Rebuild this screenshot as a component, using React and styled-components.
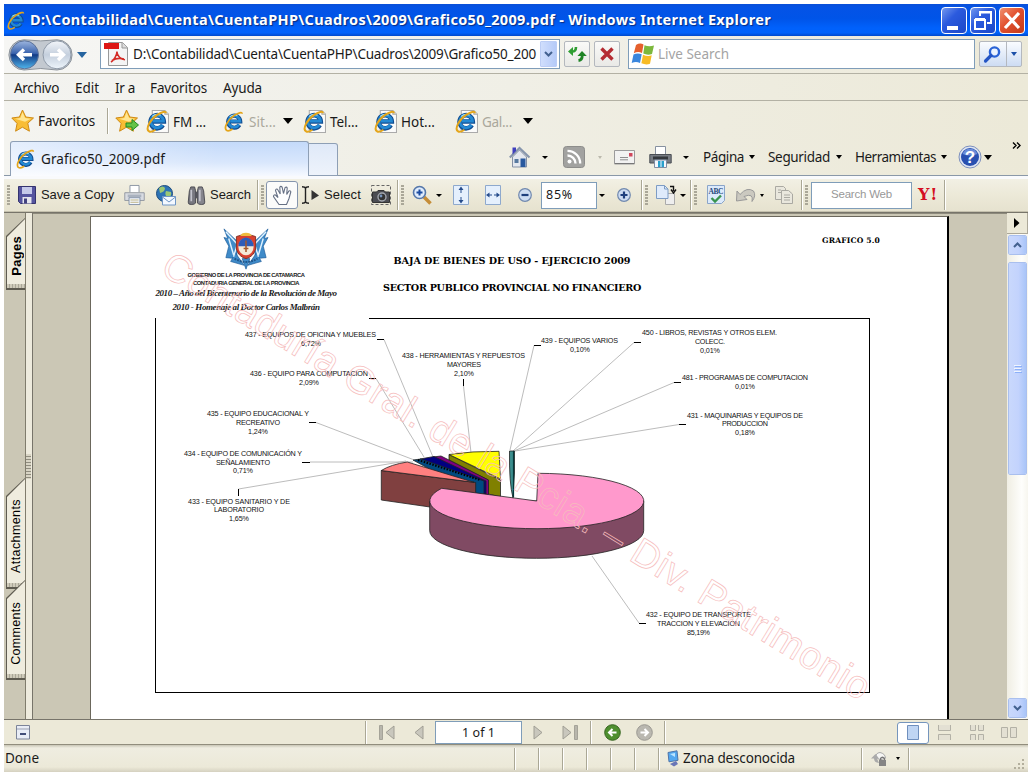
import React, { useLayoutEffect, useRef, useState } from "react";
import styled, { createGlobalStyle } from "styled-components";

const GlobalStyle = createGlobalStyle`
  * { box-sizing: border-box; }
  body { margin: 0; background: #fff; overflow: hidden; font-family: "Noto Sans", "Liberation Sans", sans-serif; }
  svg { display: block; flex: none; overflow: visible; }
`;

/* ---------- text that spreads evenly over a given width ---------- */

const Label = styled.span`
  flex: none;
  display: block;
  width: ${(p) => p.$w}px;
  margin-left: ${(p) => p.$gap || 0}px;
  margin-top: ${(p) => p.$drop || 0}px;
  white-space: pre;
  font-size: ${(p) => p.$size || 13.5}px;
  font-weight: ${(p) => p.$weight || 400};
  font-family: ${(p) => p.$font || "inherit"};
  font-style: ${(p) => (p.$italic ? "italic" : "normal")};
  color: ${(p) => p.$color || "#1a1a1a"};
  line-height: 1.2;
`;

function Fit({ w, children, ...rest }) {
  const ref = useRef(null);
  const [spacing, setSpacing] = useState(0);
  useLayoutEffect(() => {
    const natural = ref.current.getBoundingClientRect().width;
    setSpacing((w - natural) / String(children).length);
  }, [w, children]);
  return (
    <Label $w={w} {...rest}>
      <span ref={ref} style={{ letterSpacing: spacing }}>{children}</span>
    </Label>
  );
}

/* ---------- shared parts ---------- */

const SANS = '"Liberation Sans", sans-serif';
const BOOK = '"DejaVu Serif", serif';

const Part = styled.div`
  flex: none;
  display: flex;
  align-items: center;
  width: ${(p) => (p.$w ? p.$w + "px" : "auto")};
  margin-left: ${(p) => p.$gap || 0}px;
  margin-top: ${(p) => p.$drop || 0}px;
`;

const Arrow = styled.i`
  flex: none;
  width: 0;
  height: 0;
  margin-left: ${(p) => p.$gap || 0}px;
  margin-top: ${(p) => p.$drop || 0}px;
  border-left: ${(p) => (p.$w || 5) / 2}px solid transparent;
  border-right: ${(p) => (p.$w || 5) / 2}px solid transparent;
  border-top: ${(p) => Math.ceil((p.$w || 5) / 2)}px solid ${(p) => p.$color || "#000"};
`;

const Divider = styled.i`
  flex: none;
  width: 2px;
  height: ${(p) => p.$h || 30}px;
  margin-left: ${(p) => p.$gap || 0}px;
  border-left: 1px solid #aaa795;
  background: #fff;
`;

const Gripper = styled.i`
  flex: none;
  width: 3px;
  height: 20px;
  margin-left: ${(p) => p.$gap || 0}px;
  background: repeating-linear-gradient(#aaa798 0 2px, transparent 2px 3px);
`;

const Window = styled.div`
  width: 1024px;
  height: 768px;
  margin: 4px;
  display: flex;
  flex-direction: column;
  background: #ece9d8;
`;

/* ---------- browser chrome ---------- */

const TitleBar = styled.header`
  flex: none;
  height: 32px;
  display: flex;
  align-items: center;
  padding: 0 3px;
  background: linear-gradient(#0a50d8 0, #0453e6 12%, #0054e8 45%, #0061fc 75%, #0062fb 90%, #0049cc 100%);
`;

const TitleText = styled.div`
  flex: 1;
  text-shadow: 1px 1px 1px #0a2c80;
`;

const WindowButton = styled.button`
  width: 26px;
  height: 27px;
  margin-left: 3px;
  padding: 0;
  border: 1px solid #fff;
  border-radius: 4px;
  background: ${(p) =>
    p.$close
      ? "linear-gradient(135deg, #f09070, #e2512f 45%, #c33a18)"
      : "linear-gradient(135deg, #7398ee, #2b5ade 40%, #1c48c8)"};
`;

const NavBar = styled.div`
  flex: none;
  height: 38px;
  display: flex;
  align-items: flex-start;
  padding: 3px 0 0 5px;
  border-bottom: 1px solid #b3b1a4;
  background: linear-gradient(90deg, #f6f6f4, #f2f1ea 50%, #ece9d8);
`;

const Field = styled.div`
  flex: none;
  display: flex;
  align-items: center;
  width: ${(p) => p.$w}px;
  height: ${(p) => p.$h}px;
  margin-left: ${(p) => p.$gap || 0}px;
  padding: ${(p) => p.$pad || "0"};
  overflow: hidden;
  border: 1px solid #7f9db9;
  background: #fff;
`;

const DropButton = styled.button`
  width: 18px;
  height: 26px;
  margin-left: 4px;
  padding: 0;
  display: grid;
  place-items: center;
  border: 1px solid #bccdf5;
  border-radius: 1px;
  background: linear-gradient(90deg, #d0defc, #b5caf8);
`;

const NavButton = styled.button`
  flex: none;
  display: flex;
  align-items: center;
  justify-content: space-evenly;
  width: ${(p) => p.$w}px;
  height: 26px;
  margin: 2px 0 0 ${(p) => p.$gap}px;
  padding: 0;
  border: 1px solid #b4b8be;
  border-radius: 2px;
  background: ${(p) => (p.$blue ? "linear-gradient(#fafcff, #cddcf3)" : "linear-gradient(#fafaf8, #e9e9e6)")};
`;

const ButtonSplit = styled.i`
  width: 1px;
  height: 24px;
  background: #b4b8be;
`;

const MenuBar = styled.nav`
  flex: none;
  height: 27px;
  display: flex;
  align-items: center;
  padding: 2px 0 0 10px;
  border-bottom: 1px solid #b3b1a4;
  background: linear-gradient(90deg, #f3f3f0, #f0efe6 50%, #ece9d8);
`;

const FavoritesBar = styled.div`
  flex: none;
  height: 40px;
  display: flex;
  align-items: center;
  padding-left: 7px;
  background: linear-gradient(90deg, #f4f4f0, #f0efe6 40%, #ece9d8);
`;

const TabRow = styled.div`
  flex: none;
  height: 38px;
  display: flex;
  align-items: flex-start;
  padding-left: 6px;
  background: linear-gradient(transparent 34px, #8a98a8 34px 35px, #f9fafc 35px 38px),
    linear-gradient(90deg, #f4f4f0, #f0efe6 40%, #ece9d8);
`;

const Tab = styled.div`
  flex: none;
  width: 299px;
  height: 35px;
  display: flex;
  align-items: center;
  padding-left: 5px;
  border: 1px solid #8e9fb5;
  border-bottom: 0;
  border-radius: 3px 3px 0 0;
  background: linear-gradient(90deg, rgba(255, 255, 255, 0.55), rgba(255, 255, 255, 0) 70%),
    linear-gradient(#c4dafa, #d9e7fc 60%, #f6f9ff);
`;

const NewTab = styled.div`
  flex: none;
  width: 29px;
  height: 33px;
  margin-top: 2px;
  border: 1px solid #8e9fb5;
  border-left: 0;
  border-radius: 0 3px 0 0;
  background: linear-gradient(#dfe9f8, #eef3fb);
`;

const Commands = styled.div`
  flex: 1;
  height: 32px;
  display: flex;
  align-items: center;
`;

/* ---------- document viewer ---------- */

const PdfToolbar = styled.div`
  flex: none;
  height: 33px;
  display: flex;
  align-items: center;
  padding-left: 3px;
  background: linear-gradient(#f2f0e4, #ece9d8 50%, #e6e2cf);
  border-bottom: 1px solid #c5c1ae;
`;

const ToolButton = styled.button`
  flex: none;
  width: 32px;
  height: 28px;
  margin-left: 2px;
  padding: 0;
  display: grid;
  place-items: center;
  border: 1px solid #8595ad;
  border-radius: 3px;
  background: #fbfbfa;
`;

const Viewer = styled.main`
  flex: none;
  height: 508px;
  display: flex;
  border-top: 1px solid #77746a;
  background: #cbc7b5;
  border-bottom: 1px solid #77746a;
`;

const SideTabs = styled.aside`
  flex: none;
  width: 22px;
  display: flex;
  flex-direction: column;
  align-items: flex-end;
  border-right: 1px solid #807c6c;
`;

const SideTabEdge = styled.div`
  flex: none;
  width: 19px;
  height: ${(p) => p.$h}px;
  margin-top: ${(p) => p.$gap}px;
  padding: 1px 0 2px 1px;
  background: #5e5b50;
  clip-path: polygon(100% 0, 100% 100%, 0 100%, 0 18px);
`;

const SideTabFace = styled.div`
  height: 100%;
  display: flex;
  flex-direction: column;
  align-items: center;
  justify-content: flex-end;
  background: #efecde;
  clip-path: polygon(100% 0, 100% 100%, 0 100%, 0 18px);

  &::after {
    content: "";
    align-self: stretch;
    height: 4px;
    background: repeating-linear-gradient(90deg, #cfcbba 0 2px, #aaa798 2px 3px);
  }
`;

const SideTabText = styled.span`
  writing-mode: vertical-rl;
  transform: rotate(180deg);
  margin-bottom: ${(p) => p.$lift}px;
  font: ${(p) => (p.$bold ? "bold 13px" : "12.5px")} ${SANS};
  letter-spacing: ${(p) => p.$spacing}px;
  color: #000;
  white-space: nowrap;
`;

const Splitter = styled.div`
  flex: none;
  width: 7px;
  display: flex;
  padding-top: 241px;
  background: #eeebdd;
  border-right: 1px solid #77746a;
`;

const SplitterGrip = styled.i`
  width: 5px;
  height: 25px;
  background: repeating-linear-gradient(#d8d4c4 0 2px, #8f8c7e 2px 3px);
`;

const Desk = styled.div`
  flex: 1;
  display: flex;
  padding: 2px 0 0 57px;
  border-top: 1px solid #8d8a7c;
`;

const Sheet = styled.article`
  position: relative;
  width: 859px;
  height: 503px;
  padding: 11px 0 0 64px;
  border: solid #000;
  border-color: #6b675c #000 #000 #6b675c;
  border-width: 1px 2px 0 1px;
  background: #fff;
  overflow: hidden;
`;

const SheetHead = styled.div`
  display: flex;
  align-items: flex-start;
  height: 90px;
`;

const Letterhead = styled.div`
  width: 184px;
  display: flex;
  flex-direction: column;
  align-items: center;
  margin-left: -1px;
`;

const Titles = styled.div`
  display: flex;
  flex-direction: column;
  align-items: center;
  width: 262px;
  margin: 27px 0 0 43px;
  gap: 15px;
`;

const ChartFrame = styled.section`
  width: 715px;
  height: 375px;
  border: solid #000;
  border-width: 0 1px 1px 1px;
  background: linear-gradient(#000, #000) 213px 0 / 100% 1px no-repeat;
`;

const Stamp = styled.svg`
  position: absolute;
  left: -1px;
  top: -1px;
`;

const Scrollbar = styled.div`
  flex: none;
  width: 21px;
  display: flex;
  flex-direction: column;
  align-items: center;
  background: linear-gradient(90deg, #f0eee3, #fefefc 70%, #f7f6ef);
`;

const ScrollCorner = styled.div`
  width: 100%;
  height: 21px;
  display: grid;
  place-items: center;
  background: #ece9d8;
  border-bottom: 1px solid #aca899;
  border-right: 1px solid #aca899;
`;

const ScrollPiece = styled.div`
  width: 19px;
  height: ${(p) => p.$h}px;
  margin-top: ${(p) => p.$gap}px;
  display: grid;
  place-items: center;
  border: 1px solid #fff;
  border-radius: 2px;
  outline: 1px solid #a9bfee;
  outline-offset: -1px;
  background: linear-gradient(90deg, #c9d8fc, #c3d3fd 55%, #a9c5f8);
`;

const PageBar = styled.footer`
  flex: none;
  height: 25px;
  display: flex;
  align-items: center;
  padding: 1px 0 0 12px;
  background: #ece9d8;
  border-bottom: 1px solid #918d7d;
`;

const LayoutButton = styled.button`
  flex: none;
  width: 32px;
  height: 22px;
  margin-left: 231px;
  padding: 0;
  display: grid;
  place-items: center;
  border: 1px solid #7595bd;
  border-radius: 3px;
  background: #fff;
`;

const StatusBar = styled.footer`
  flex: none;
  height: 27px;
  display: flex;
  align-items: center;
  padding-left: 1px;
  background: linear-gradient(#c9c6b6 0, #efede1 3px, #ece9d8 22px, #d5d1c0);
`;

/* ---------- icons ---------- */

const IeMark = ({ size = 20, page }) => (
  <svg width={size} height={size} viewBox="0 0 22 22">
    {page && <path d="M6 .5h12l3.5 3.5v17.5H6z" fill="#fbfbfa" stroke="#aaa" />}
    {page && <path d="M18 .5V4h3.5" fill="#ddd" stroke="#aaa" />}
    <path d="M16.1 14.5A6.3 6.3 0 1 1 17 11H6.5" fill="none" stroke="#124d91" strokeWidth="4.4" />
    <path d="M15.8 14.2A6 6 0 1 1 16.7 10.7H6.5" fill="none" stroke="#2389d3" strokeWidth="2.7" />
    <path d="M6 6.2Q9.5 3 14 5" fill="none" stroke="#9bdcf8" strokeWidth="1.2" />
    <path d="M3 20.5C-1 18 4 9 11 4.5c4-2.5 8-4 8-1.5M3 20.5c1.5 1 4-.3 6-1.6" fill="none" stroke="#e4a51a" strokeWidth="1.9" />
  </svg>
);

const Star = ({ add }) => (
  <svg width="24" height="24" viewBox="0 0 24 24">
    <path d="M11.5 1l3.3 7 7.7 1-5.7 5.2 1.6 8-7-4-6.8 4 1.5-7.8L.8 9l7.6-1z" fill="#f9bd34" stroke="#cf8b16" />
    <path d="M11.5 3l2.6 6 5.9.8-6 3-10-3 5.3-.9z" fill="#ffe591" />
    {add && <path d="M11 14h6v-3.5l6.5 5.5-6.5 5.5V18h-6z" fill="#65c347" stroke="#218b24" />}
  </svg>
);

const PdfIcon = () => (
  <svg width="24" height="24" viewBox="0 0 24 24">
    <path d="M4.500 .5h14l5 5v18h-19z" fill="#f4f4f4" stroke="#999" />
    <path d="M18 .5v5.500h5.500" fill="#ddd" stroke="#999" />
    <path d="M0 1h15v6H0z" fill="#dd1715" />
    <path d="M7 20c3-2 6-7 6-10.500M13 10c0 4 4 7.500 8 7.700M8 18.500c4-2.500 8-2.500 12-1.500" fill="none" stroke="#d42a25" strokeWidth="1.600" />
  </svg>
);

const HistoryButtons = () => (
  <svg width="64" height="32" viewBox="0 0 64 32">
    <defs>
      <linearGradient id="back" x2="0" y2="1">
        <stop stopColor="#9db6df" /><stop offset=".45" stopColor="#3a63ad" /><stop offset=".5" stopColor="#123a85" /><stop offset="1" stopColor="#4fb6ec" />
      </linearGradient>
      <linearGradient id="fwd" x2="0" y2="1">
        <stop stopColor="#f3f6fa" /><stop offset=".5" stopColor="#c4cfdd" /><stop offset="1" stopColor="#eef5fb" />
      </linearGradient>
    </defs>
    <path d="M15 .8Q32 3 48 .8A15 15 0 0 1 48 31Q32 28 15 31A15 15 0 0 1 15 .8z" fill="#c3c9d0" stroke="#8c939b" />
    <circle cx="15.500" cy="15.800" r="14" fill="url(#back)" stroke="#5d7399" />
    <circle cx="48" cy="15.800" r="14" fill="url(#fwd)" stroke="#8f9aa8" />
    <path d="M23 15.800H10M15 10.500L9.500 15.800l5.500 5.200" fill="none" stroke="#fff" strokeWidth="3.400" />
    <path d="M41 15.800h13M49 10.500l5.500 5.300-5.500 5.200" fill="none" stroke="#fff" strokeWidth="3.400" />
  </svg>
);

const Chevron = ({ up, w = 9 }) => (
  <svg width={w} height={w * 0.67} viewBox="0 0 9 6">
    <path d={up ? "M1 5l3.500-3.500L8 5" : "M1 1l3.500 3.500L8 1"} fill="none" stroke="#43618f" strokeWidth="2" />
  </svg>
);

const RefreshIcon = () => (
  <svg width="19" height="16" viewBox="0 0 19 16">
    <path d="M3.500 5.500q4.500.500 4.500-4.500" fill="none" stroke="#2f9e33" strokeWidth="2.600" />
    <path d="M0 5.500L5 1v9z" fill="#2f9e33" />
    <path d="M10.500 14.500q4-.5 3.700-5.500" fill="none" stroke="#1f8426" strokeWidth="2.800" />
    <path d="M14 5l4.800 5H9.500z" fill="#1f8426" />
  </svg>
);

const StopIcon = () => (
  <svg width="14" height="14" viewBox="0 0 14 14">
    <path d="M1.500 1.500l11 11M12.500 1.500l-11 11" stroke="#b52c33" strokeWidth="3.400" />
  </svg>
);

const WindowsFlag = () => (
  <svg width="23" height="22" viewBox="0 0 23 22">
    <path d="M4 2q4-2.500 7.500-.500L10 10Q6 8 1.800 10.300z" fill="#e5602d" />
    <path d="M12.500 2.200Q17 4 22 2.500L20 11q-4.500 1.500-8.700-.5z" fill="#7cb83c" />
    <path d="M1.500 11.500q4-2 8.200-.3L8 20Q4 18-.3 20z" fill="#3a86dd" />
    <path d="M11 11.700q4.500 2 8.700.6L18 20.800q-4 1.500-8.600-.5z" fill="#f7bb25" />
  </svg>
);

const Lens = () => (
  <svg width="17" height="17" viewBox="0 0 17 17">
    <circle cx="10.500" cy="6" r="4.600" fill="#eaf3ff" stroke="#2a63d6" strokeWidth="2.400" />
    <path d="M7 9.500L1.500 15" stroke="#2455c4" strokeWidth="3.200" strokeLinecap="round" />
  </svg>
);

const HomeIcon = () => (
  <svg width="22" height="22" viewBox="0 0 22 22">
    <path d="M3.500 11v10h14V11l-7-7z" fill="#e4e8ef" stroke="#8591a5" />
    <path d="M.8 11.500L10.500 2l10 9.500" fill="none" stroke="#8796ad" strokeWidth="2.200" />
    <path d="M3.500 8.500V1.500h3.500V5z" fill="#3f3fbd" />
    <path d="M11.500 12.500h5V21h-5z" fill="#28599e" /><path d="M5.500 13h4v4h-4z" fill="#57799f" />
  </svg>
);

const RssIcon = () => (
  <svg width="22" height="22" viewBox="0 0 22 22">
    <rect x=".5" y=".5" width="21" height="21" rx="3" fill="#a2a2a0" stroke="#8d8d8b" />
    <circle cx="6.500" cy="15.500" r="2" fill="#fff" />
    <path d="M4.500 9.500a8 8 0 0 1 8 8M4.500 4.800a12.700 12.700 0 0 1 12.700 12.700" fill="none" stroke="#fff" strokeWidth="2.300" />
  </svg>
);

const MailIcon = () => (
  <svg width="21" height="15" viewBox="0 0 21 15">
    <path d="M.5.500h20v13.500H.5z" fill="#f2f2f1" stroke="#9b9b9b" />
    <path d="M1 13.500h19" stroke="#777" /><path d="M6 7.500h8M6 9.800h8" stroke="#8e8e8e" />
    <path d="M15 3h3.500v3.500H15z" fill="#d0475b" />
  </svg>
);

const PrinterIcon = ({ pale }) => (
  <svg width={pale ? 21 : 23} height={pale ? 20 : 22} viewBox="0 0 23 22">
    <path d="M6.500 8V.5h10V8" fill="#fff" stroke="#8791a0" />
    <path d="M.8 8.500h21.400v8.500H.8z" fill={pale ? "#d9dce2" : "#777c83"} stroke={pale ? "#8e949e" : "#4b4f55"} />
    <path d="M4 10.500h15v3H4z" fill={pale ? "#aab2bf" : "#34383d"} />
    <path d="M5.500 14h12v7.500h-12z" fill="#f4f8ff" stroke="#7f8da3" />
    <path d={pale ? "M7 16.500h9M7 19h9" : "M9 15h2.500v6H9zM12.500 15H15v6h-2.500z"} fill="#29a0cb" stroke={pale ? "#b9ad78" : "none"} />
  </svg>
);

const HelpIcon = () => (
  <svg width="24" height="24" viewBox="0 0 24 24">
    <circle cx="12" cy="12" r="11" fill="#dfe5f1" stroke="#7d90bd" />
    <circle cx="12" cy="12" r="9" fill="#2950b0" /><path d="M4.500 9a8 8 0 0 1 15 0q-7.500 3-15 0z" fill="#6a8cd8" />
    <text x="12" y="18" textAnchor="middle" fill="#fff" fontFamily="Liberation Sans" fontWeight="700" fontSize="17">?</text>
  </svg>
);

const SaveIcon = () => (
  <svg width="18" height="18" viewBox="0 0 18 18">
    <path d="M.5.500h17v17h-15l-2-2z" fill="#55549f" stroke="#34336f" />
    <path d="M4 1h10v7H4z" fill="#c5c9ea" /><path d="M4.500 11h9v6.500h-9z" fill="#e6e6ef" /><path d="M6 12.500h3v5H6z" fill="#42417f" />
  </svg>
);

const GlobeMail = () => (
  <svg width="21" height="21" viewBox="0 0 21 21">
    <circle cx="8.500" cy="8.500" r="8" fill="#2d73b5" stroke="#1e4c7c" />
    <path d="M3 3q4-3 6 0 0 4-5 5zM10 6l5 1q1 4-3 6-4-3-2-7z" fill="#9bc774" />
    <path d="M6.500 11.500h13v8.500h-13z" fill="#f3f8ff" stroke="#6f96c5" /><path d="M6.500 12l6.500 5 6.500-5" fill="none" stroke="#6f96c5" />
  </svg>
);

const Binoculars = () => (
  <svg width="19" height="19" viewBox="0 0 19 20">
    <path d="M2 5L3.500 1h4l1 4v13q-1 1.500-4.500 1.500T.8 17z" fill="#77777f" stroke="#4b4b52" />
    <path d="M17 5l-1.500-4h-4l-1 4v13q1 1.500 4.500 1.500t3.200-2.500z" fill="#85858d" stroke="#4b4b52" />
    <path d="M4 4v12M13 4v12" stroke="#c3c3cc" strokeWidth="1.800" /><path d="M8 6h3v7H8z" fill="#55555d" />
  </svg>
);

const HandIcon = () => (
  <svg width="21" height="21" viewBox="0 0 21 21">
    <path d="M7 19.500L1.500 11.500q0-2 2-1.500L6 12.500 3.500 5.500q.3-2 2-1.200L8.200 9 7.800 2.300q1-1.800 2.300-.2L11.500 8.500l1.500-5.800q1.500-1.300 2.200.3L14.700 9.500l2.200-3.500q1.700-.7 1.900.9L17 13.500 14.500 19.500z" fill="#fff" stroke="#667084" strokeWidth="1.100" />
  </svg>
);

const SelectIcon = () => (
  <svg width="18" height="18" viewBox="0 0 18 18">
    <path d="M0 .8q3 0 3.500 1.500Q4 .8 7 .8M3.500 2v14M0 17.200q3 0 3.500-1.500.5 1.500 3.500 1.500" fill="none" stroke="#222" strokeWidth="1.400" />
    <path d="M9.500 4l7.500 5.500-7.500 4.500z" fill="#333" />
  </svg>
);

const CameraIcon = () => (
  <svg width="20" height="20" viewBox="0 0 20 20">
    <path d="M.5.500h19v19H.5z" fill="none" stroke="#666" strokeDasharray="3 2" />
    <path d="M1.500 7h4l1.500-1.500h6L14.500 7h4v10.500h-17z" fill="#4b4c52" stroke="#333" />
    <circle cx="11" cy="12" r="4" fill="#333" stroke="#a3a7af" strokeWidth="1.400" /><circle cx="10" cy="11" r="1.400" fill="#7895bd" />
  </svg>
);

const ZoomIcon = () => (
  <svg width="20" height="20" viewBox="0 0 20 20">
    <path d="M12 12l6.500 6.500" stroke="#c58d38" strokeWidth="3.600" />
    <circle cx="7.500" cy="7.500" r="6" fill="#dfecfd" stroke="#5577a9" strokeWidth="1.600" />
    <path d="M7.500 4.500v6M4.500 7.500h6" stroke="#1b4ba0" strokeWidth="2" />
  </svg>
);

const FitIcon = ({ wide }) => (
  <svg width="16" height="20" viewBox="0 0 16 20">
    <path d="M.5.500h15v19H.5z" fill="#e5f0fd" stroke="#8ea9cd" />
    {wide ? (
      <path d="M1 10l3.500-2.500v2H7v1H4.500v2zM15 10l-3.500-2.500v2H9v1h2.500v2z" fill="#274d8c" />
    ) : (
      <path d="M8 1.500L5.500 5h2v3h1V5h2zM8 18.500L5.500 15h2v-3h1v3h2z" fill="#274d8c" />
    )}
  </svg>
);

const RoundSign = ({ plus }) => (
  <svg width="14" height="14" viewBox="0 0 14 14">
    <circle cx="7" cy="7" r="6.300" fill="#cddcf2" stroke="#7189ae" strokeWidth="1.200" />
    <path d={plus ? "M3.500 7h7M7 3.500v7" : "M3.500 7h7"} stroke="#1e3f7d" strokeWidth="2.200" />
  </svg>
);

const RotateIcon = () => (
  <svg width="21" height="20" viewBox="0 0 21 20">
    <path d="M9.500 8.500h9v11h-9z" fill="#eee" stroke="#aaa" />
    <path d="M.5.500h8L12 4v9.500H.5z" fill="#dfebfb" stroke="#7d9cc4" /><path d="M8.500.500V4H12" fill="none" stroke="#7d9cc4" />
    <path d="M14 1.500h3.500V6M15 4.500L17.500 8 20 4.500" fill="none" stroke="#111" strokeWidth="1.400" />
  </svg>
);

const SpellIcon = () => (
  <svg width="18" height="20" viewBox="0 0 18 20">
    <path d="M.5.500h17v15l-3 3H.5z" fill="#dceafb" stroke="#8aa5c9" />
    <text x="1.500" y="8.500" fontFamily="Liberation Serif" fontWeight="700" fontSize="7.500" textLength="15" fill="#27497c">ABC</text>
    <path d="M4.500 13l3.500 3.500 6-6" fill="none" stroke="#38944e" strokeWidth="2.400" />
  </svg>
);

const UndoIcon = () => (
  <svg width="21" height="15" viewBox="0 0 21 15">
    <path d="M4 6.500Q11-1.500 17.500 3q3 4.500-1.500 10.500Q18 4.500 8 8.500l3 3L.5 13 1 3z" fill="#cbc9c0" stroke="#999" />
  </svg>
);

const CopyIcon = () => (
  <svg width="18" height="18" viewBox="0 0 18 18" fill="#e9e7dd" stroke="#aaa9a2">
    <path d="M.5.500h8l2 2v11H.5z" /><path d="M6.500 4.500h7l4 3.500v9.500h-11z" /><path d="M3 4h3M3 6.500h3M9 9h6M9 11.500h6M9 14h6" />
  </svg>
);

const Crest = () => (
  <svg width="46" height="43" viewBox="0 2 48 43">
    <g fill="#3f8bc9" stroke="#1d5c99" strokeWidth=".7">
      <path d="M1 2l15 14-2 17-11-1 3-12-5-9 4 1zM47 2L32 16l2 17 11-1-3-12 5-9-4 1z" />
      <path d="M13 27l9 13-14-4zM35 27l-9 13 14-4zM20 33l4 11 4-11z" />
    </g>
    <path d="M3 5l12 13-4 13M6 12l5 17M45 5L33 18l4 13M42 12l-5 17" fill="none" stroke="#dff2ff" strokeWidth="1.500" />
    <path d="M14 10q10-4 20 0v13q-2 8-10 10-8-2-10-10z" fill="#d9412f" stroke="#843126" />
    <ellipse cx="24" cy="20.500" rx="8" ry="9" fill="#f4ead8" />
    <path d="M16 20a8 9 0 0 1 16 0z" fill="#2d5cb8" />
    <path d="M24 14v12M21.500 22.500h5" stroke="#a4582c" strokeWidth="1.600" />
    <path d="M18 9.500q1-3.500 6-3.500t6 3.500z" fill="#eebb3e" /><path d="M12 33q12 7 24 0" fill="none" stroke="#1f568b" strokeWidth="2" strokeDasharray="2 1" />
  </svg>
);

const PageStep = ({ back, end }) => (
  <svg width={end ? 16 : 10} height="15" viewBox={end ? "0 0 16 15" : "0 0 10 15"}>
    <g transform={back ? "" : `translate(${end ? 16 : 10} 0) scale(-1 1)`}>
      {end && <path d="M.5.500h3v14h-3z" fill="#b8b6ac" stroke="#a5a398" />}
      <path d={end ? "M15 1v13L7 7.500z" : "M9 1v13L1 7.500z"} fill="#c9c7bd" stroke="#a09e94" />
    </g>
  </svg>
);

const RoundArrow = ({ back }) => (
  <svg width="17" height="17" viewBox="0 0 17 17">
    <circle cx="8.500" cy="8.500" r="7.800" fill={back ? "#4f8f2f" : "#bab8b0"} stroke={back ? "#35651f" : "#9b9992"} />
    <path d={back ? "M12.500 8.500H6M8.500 5l-3.500 3.500 3.500 3.500" : "M4.500 8.500H11M8.500 5l3.500 3.500-3.500 3.500"} fill="none" stroke="#fff" strokeWidth="2" />
  </svg>
);

const LayoutIcon = ({ kind }) => {
  const shapes = {
    single: "M.5.500h11v14H.5z",
    scroll: "M.5 0v5.500h12V0M.5 15V9.500h12V15",
    grid: "M.5 0v5.500h5V0M8.500 0v5.500h5V0M.5 15V9.500h5V15M8.500 15V9.500h5V15",
    facing: "M.5 2.500h6v10h-6zM9.500 2.500h6v10h-6z",
  };
  return (
    <svg width={kind === "single" ? 12 : kind === "facing" ? 16 : 14} height="15">
      <path d={shapes[kind]} fill={kind === "single" ? "#bfd5f3" : "#e3e0d3"} stroke={kind === "single" ? "#6f8fbd" : "#b3b1a6"} />
    </svg>
  );
};

const MonitorIcon = () => (
  <svg width="13" height="17" viewBox="0 0 13 17">
    <path d="M1 2.500L10 .8l1 9.500-9 1.500z" fill="#54a8f0" stroke="#4f74a8" />
    <path d="M3 4l5-1v4z" fill="#bce5ff" /><path d="M3 14l6-3 2 3-4 2.500z" fill="#6a76b6" />
  </svg>
);

const LockIcon = () => (
  <svg width="16" height="16" viewBox="0 0 16 16">
    <path d="M5 6q-.5-4 4-4.500 5 1 5.500 5.500L9 9z" fill="#f6f6f4" stroke="#aaa" />
    <path d="M0 7.500L4.500 3 8 7.500H6L8 12Q3 11.500 3 7.500z" fill="#aaa" />
    <path d="M8 9h7v6H8z" fill="#858585" /><path d="M9.500 9V7.500q2-2.500 4 0V9" fill="none" stroke="#777" strokeWidth="1.400" />
  </svg>
);

/* ---------- chart ---------- */

const LABELS = [
  [245, 337, 131, "437 - EQUIPOS DE OFICINA Y MUEBLES"], [301, 346, 20, "6,72%"],
  [250, 376, 118, "436 - EQUIPO PARA COMPUTACION"], [299, 385, 20, "2,09%"],
  [207, 416, 102, "435 - EQUIPO EDUCACIONAL Y"], [236, 425, 44, "RECREATIVO"], [248, 434, 20, "1,24%"],
  [184, 456, 118, "434 - EQUIPO DE COMUNICACIÓN Y"], [216, 465, 54, "SEÑALAMIENTO"], [233, 473, 20, "0,71%"],
  [188, 504, 102, "433 - EQUIPO SANITARIO Y DE"], [214, 512, 50, "LABORATORIO"], [229, 521, 20, "1,65%"],
  [402, 358, 123, "438 - HERRAMIENTAS Y REPUESTOS"], [447, 367, 34, "MAYORES"], [454, 376, 20, "2,10%"],
  [541, 343, 77, "439 - EQUIPOS VARIOS"], [570, 352, 20, "0,10%"],
  [642, 335, 135, "450 - LIBROS, REVISTAS Y OTROS ELEM."], [695, 344, 30, "COLECC."], [700, 353, 20, "0,01%"],
  [682, 380, 126, "481 - PROGRAMAS DE COMPUTACION"], [735, 389, 20, "0,01%"],
  [687, 418, 116, "431 - MAQUINARIAS Y EQUIPOS DE"], [722, 426, 46, "PRODUCCION"], [735, 435, 20, "0,18%"],
  [646, 617, 105, "432 - EQUIPO DE TRANSPORTE"], [657, 626, 83, "TRACCION Y ELEVACION"], [687, 635, 23, "85,19%"],
];

const LEADERS =
  "M384 339.500L433 457M376 378.500L424 457M316 422.500L413 459.500M310 462H413M238.500 489L406 461M463.500 386L471 452.500M534 345.500L510 450M634 342.500L513 451M674 382.500L514 451M679 424.500L515 451M592 556L639 623";
const TICKS =
  "M377 339.500h7M369 378.500h7M309 422.500h7M302 462.500h8M238.500 489v7M463.500 379v7M534 345.500h7M634 342.500h7M674 382.500h7M679 424.500h7M639 623.500h7";

const PieChart = () => (
  <svg width="713" height="374" viewBox="156 318 713 374">
    <path d={LEADERS} fill="none" stroke="#b4b4b4" strokeWidth=".9" />
    <path d={TICKS} stroke="#000" />
    <g stroke="#222" strokeWidth=".8" strokeLinejoin="round">
      <path d="M449 454.500L500.500 480v17l-12-3V480l-39.500-20z" fill="#808000" />
      <path d="M449 454.500Q472 451 499 451.300L500.500 479z" fill="#ffff00" />
      <path d="M433 457L441 456 488.500 480v15h-4z" fill="#800080" />
      <path d="M420 459L434 456.500 486 481v13h-6z" fill="#000080" />
      <path d="M413 460L421 459 484 481v13h-9z" fill="#004a80" />
      <path d="M418 460L480 480" stroke="#000" strokeDasharray="1.500 1.500" strokeWidth="2" />
      <path d="M381.300 470.500L475.700 482.500V494L430 507 381.300 500z" fill="#804040" />
      <path d="M381.300 470.500Q391 464.500 407.300 462L474 482.300z" fill="#ff8080" />
      <path d="M509.500 451h5v22l-1.500 25q-4-15-3.500-47z" fill="#3c8e8e" />
      <path d="M513.500 451v46" stroke="#06383a" strokeWidth="1.200" />
      <path d="M429.700 501v29.600A107 27.700 0 0 0 643.700 530.600V501z" fill="#804a63" />
      <path d="M536.700 501L538 473.300A107 27.700 0 1 1 441.700 488.300z" fill="#ff99cc" />
    </g>
    <g fontFamily="Liberation Sans" fontSize="7.200" fill="#111">
      {LABELS.map(([x, y, w, t], i) => (
        <text key={i} x={x} y={y} textLength={w}>{t}</text>
      ))}
    </g>
  </svg>
);

/* ---------- page ---------- */

const FavLink = ({ gap, size = 23, page, between, w, color, children }) => (
  <Part $gap={gap}>
    <IeMark size={size} page={page} />
    <Fit w={w} $gap={between} $drop={2} $color={color}>{children}</Fit>
  </Part>
);

export default function App() {
  return (
    <>
      <GlobalStyle />
      <Window>
        <TitleBar>
          <IeMark size={19} />
          <TitleText>
            <Fit w={741} $gap={4} $size={14.5} $weight={700} $color="#fff">
              {"D:\\Contabilidad\\Cuenta\\CuentaPHP\\Cuadros\\2009\\Grafico50_2009.pdf - Windows Internet Explorer"}
            </Fit>
          </TitleText>
          <WindowButton><svg width="24" height="25"><path d="M5 18h11v4H5z" fill="#fff" /></svg></WindowButton>
          <WindowButton>
            <svg width="24" height="25" fill="none" stroke="#fff" strokeWidth="2"><path d="M4 12h10v9H4zM4 11h10M9 8V4h11v11h-4M9 4.500h11" /></svg>
          </WindowButton>
          <WindowButton $close><svg width="24" height="25"><path d="M5 5l14 15M19 5L5 20" stroke="#fff" strokeWidth="3.200" /></svg></WindowButton>
        </TitleBar>

        <NavBar>
          <HistoryButtons />
          <Arrow $gap={4} $w={11} $drop={13} $color="#26649f" />
          <Field $gap={13} $w={460} $h={30} $pad="0 2px 0 3px">
            <PdfIcon />
            <Fit w={403} $gap={5}>{"D:\\Contabilidad\\Cuenta\\CuentaPHP\\Cuadros\\2009\\Grafico50_200"}</Fit>
            <DropButton><Chevron /></DropButton>
          </Field>
          <NavButton $gap={4} $w={26}><RefreshIcon /></NavButton>
          <NavButton $gap={4} $w={26}><StopIcon /></NavButton>
          <Field $gap={8} $w={347} $h={30} $pad="0 3px">
            <WindowsFlag />
            <Fit w={71} $gap={3} $color="#a4a4a4">Live Search</Fit>
          </Field>
          <NavButton $gap={4} $w={43} $blue><Lens /><ButtonSplit /><Arrow $w={7} $color="#1c50a8" /></NavButton>
        </NavBar>

        <MenuBar>
          <Fit w={45}>Archivo</Fit>
          <Fit w={24} $gap={16}>Edit</Fit>
          <Fit w={20} $gap={16}>Ir a</Fit>
          <Fit w={57} $gap={15}>Favoritos</Fit>
          <Fit w={39} $gap={16}>Ayuda</Fit>
        </MenuBar>

        <FavoritesBar>
          <Star />
          <Fit w={57} $gap={3}>Favoritos</Fit>
          <Divider $gap={12} $h={26} />
          <Part $gap={6}><Star add /></Part>
          <FavLink gap={7} page between={4} w={33}>FM ...</FavLink>
          <FavLink gap={18} size={21} between={4} w={27} color="#aaa89c">Sit...</FavLink>
          <Arrow $gap={7} $w={11} />
          <FavLink gap={10} page between={4} w={28}>Tel...</FavLink>
          <FavLink gap={16} page between={4} w={34}>Hot...</FavLink>
          <FavLink gap={20} page between={4} w={30} color="#aaa89c">Gal...</FavLink>
          <Arrow $gap={11} $w={11} />
        </FavoritesBar>

        <TabRow>
          <Tab>
            <IeMark size={20} />
            <Fit w={124} $gap={5}>Grafico50_2009.pdf</Fit>
          </Tab>
          <NewTab />
          <Commands>
            <Part $gap={171}><HomeIcon /></Part>
            <Arrow $gap={11} $w={6} />
            <Part $gap={15}><RssIcon /></Part>
            <Arrow $gap={13} $w={5} $color="#bbb9ad" />
            <Part $gap={12}><MailIcon /></Part>
            <Part $gap={14}><PrinterIcon /></Part>
            <Arrow $gap={11} $w={6} />
            <Fit w={41} $gap={14}>Página</Fit>
            <Arrow $gap={5} $w={7} />
            <Fit w={62} $gap={13}>Seguridad</Fit>
            <Arrow $gap={6} $w={7} />
            <Fit w={81} $gap={13}>Herramientas</Fit>
            <Arrow $gap={5} $w={7} />
            <Part $gap={11}><HelpIcon /></Part>
            <Arrow $gap={2} $w={9} />
            <Part $gap={20} $drop={-23}>
              <svg width="9" height="7"><path d="M1 .5l3 3-3 3M5 .5l3 3-3 3" fill="none" stroke="#000" strokeWidth="1.400" /></svg>
            </Part>
          </Commands>
        </TabRow>

        <PdfToolbar>
          <Gripper />
          <Part $gap={8}><SaveIcon /></Part>
          <Fit w={73} $gap={5} $font={SANS} $size={13}>Save a Copy</Fit>
          <Part $gap={10}><PrinterIcon pale /></Part>
          <Part $gap={11}><GlobeMail /></Part>
          <Part $gap={10}><Binoculars /></Part>
          <Fit w={41} $gap={4} $font={SANS} $size={13}>Search</Fit>
          <Divider $gap={6} />
          <Gripper $gap={2} />
          <ToolButton><HandIcon /></ToolButton>
          <Part $gap={4}><SelectIcon /></Part>
          <Fit w={37} $gap={4} $font={SANS} $size={13}>Select</Fit>
          <Part $gap={10}><CameraIcon /></Part>
          <Divider $gap={6} />
          <Gripper $gap={2} />
          <Part $gap={8}><ZoomIcon /></Part>
          <Arrow $gap={4} $w={6} />
          <Part $gap={11}><FitIcon /></Part>
          <Part $gap={16}><FitIcon wide /></Part>
          <Part $gap={17}><RoundSign /></Part>
          <Field $gap={9} $w={56} $h={27} $pad="0 0 2px 4px"><Fit w={27} $size={12.5}>85%</Fit></Field>
          <Arrow $gap={2} $w={6} />
          <Part $gap={12}><RoundSign plus /></Part>
          <Divider $gap={10} />
          <Gripper $gap={2} />
          <Part $gap={8}><RotateIcon /></Part>
          <Arrow $gap={3} $w={6} />
          <Divider $gap={4} />
          <Gripper $gap={2} />
          <Part $gap={10}><SpellIcon /></Part>
          <Part $gap={11}><UndoIcon /></Part>
          <Arrow $gap={3} $w={5} />
          <Part $gap={11}><CopyIcon /></Part>
          <Divider $gap={8} />
          <Gripper $gap={2} />
          <Field $gap={3} $w={101} $h={27} $pad="0 0 0 19px">
            <Fit w={61} $font={SANS} $size={11.5} $color="#989898">Search Web</Fit>
          </Field>
          <Fit w={20} $gap={6} $font={BOOK} $size={16} $weight={700} $color="#d40f23">Y!</Fit>
          <Divider $gap={6} />
        </PdfToolbar>

        <Viewer>
          <SideTabs>
            <SideTabEdge $gap={5} $h={72}><SideTabFace><SideTabText $bold $lift={8} $spacing={0.3}>Pages</SideTabText></SideTabFace></SideTabEdge>
            <SideTabEdge $gap={188} $h={111}><SideTabFace><SideTabText $lift={10} $spacing={0.4}>Attachments</SideTabText></SideTabFace></SideTabEdge>
            <SideTabEdge $gap={-9} $h={100}><SideTabFace><SideTabText $lift={9} $spacing={0.3}>Comments</SideTabText></SideTabFace></SideTabEdge>
          </SideTabs>
          <Splitter><SplitterGrip /></Splitter>
          <Desk>
            <Sheet>
              <SheetHead>
                <Letterhead>
                  <Crest />
                  <Fit w={117} $drop={1} $font={SANS} $size={5.8} $weight={700}>GOBIERNO DE LA PROVINCIA DE CATAMARCA</Fit>
                  <Fit w={106} $drop={1} $font={SANS} $size={5.8} $weight={700}>CONTADURIA GENERAL DE LA PROVINCIA</Fit>
                  <Fit w={181} $drop={1} $font='"Liberation Serif", serif' $size={9} $weight={700} $italic>2010 – Año del Bicentenario de la Revolución de Mayo</Fit>
                  <Fit w={147} $drop={3} $font='"Liberation Serif", serif' $size={9} $weight={700} $italic>2010 - Homenaje al Doctor Carlos Malbrán</Fit>
                </Letterhead>
                <Titles>
                  <Fit w={237} $font={BOOK} $size={9.6} $weight={700} $color="#000">BAJA DE BIENES DE USO - EJERCICIO 2009</Fit>
                  <Fit w={258} $font={BOOK} $size={9.6} $weight={700} $color="#000">SECTOR PUBLICO PROVINCIAL NO FINANCIERO</Fit>
                </Titles>
                <Fit w={58} $gap={179} $drop={8} $font={BOOK} $size={7.6} $weight={700} $color="#000">GRAFICO 5.0</Fit>
              </SheetHead>
              <ChartFrame><PieChart /></ChartFrame>
              <Stamp width="857" height="502" viewBox="91 216 857 502">
                <text transform="translate(160 273) rotate(31.400)" fontFamily="Liberation Sans" fontSize="39" textLength="822" fill="none" stroke="#f6bcbc" strokeWidth=".7">
                  Contaduría Gral. de la Pcia. – Div. Patrimonio
                </text>
              </Stamp>
            </Sheet>
          </Desk>
          <Scrollbar>
            <ScrollCorner><svg width="6" height="10"><path d="M0 0l5.500 5L0 10z" /></svg></ScrollCorner>
            <ScrollPiece $h={20} $gap={1}><Chevron up /></ScrollPiece>
            <ScrollPiece $h={213} $gap={7}>
              <svg width="8" height="8"><path d="M0 .5h7M0 3.500h7M0 6.500h7" stroke="#eef4fe" /><path d="M1 1.500h7M1 4.500h7M1 7.500h7" stroke="#8cb0f8" /></svg>
            </ScrollPiece>
            <ScrollPiece $h={20} $gap={223}><Chevron /></ScrollPiece>
          </Scrollbar>
        </Viewer>

        <PageBar>
          <svg width="14" height="15"><path d="M.5.500h13v13.500H.5z" fill="#e9edf6" stroke="#7c8499" /><path d="M1 4h12" stroke="#9aa1b3" /><path d="M4 9h6" stroke="#424e78" strokeWidth="2" /></svg>
          <Divider $gap={335} $h={23} />
          <Part $gap={12}><PageStep back end /></Part>
          <Part $gap={19}><PageStep back /></Part>
          <Field $gap={11} $w={87} $h={23} $pad="0 0 0 26px"><Fit w={33} $size={12.5}>1 of 1</Fit></Field>
          <Part $gap={11}><PageStep /></Part>
          <Part $gap={19}><PageStep end /></Part>
          <Divider $gap={12} $h={23} />
          <Part $gap={12}><RoundArrow back /></Part>
          <Part $gap={15}><RoundArrow /></Part>
          <Divider $gap={11} $h={23} />
          <LayoutButton><LayoutIcon kind="single" /></LayoutButton>
          <Part $gap={9}><LayoutIcon kind="scroll" /></Part>
          <Part $gap={18}><LayoutIcon kind="grid" /></Part>
          <Part $gap={17}><LayoutIcon kind="facing" /></Part>
        </PageBar>

        <StatusBar>
          <Fit w={34}>Done</Fit>
          <Divider $gap={475} $h={22} />
          {[0, 1, 2, 3, 4, 5].map((i) => <Divider key={i} $gap={22} $h={22} />)}
          <Part $gap={7}><MonitorIcon /></Part>
          <Fit w={112} $gap={3}>Zona desconocida</Fit>
          <Divider $gap={66} $h={22} />
          <Part $gap={8}><LockIcon /></Part>
          <Arrow $gap={9} $w={5} />
          <Divider $gap={8} $h={22} />
          <Part $gap={103} $drop={13}>
            <svg width="12" height="12" fill="#b3af9d"><path d="M9 0h2v2H9zM5 4h2v2H5zM9 4h2v2H9zM1 8h2v2H1zM5 8h2v2H5zM9 8h2v2H9z" /></svg>
          </Part>
        </StatusBar>
      </Window>
    </>
  );
}
